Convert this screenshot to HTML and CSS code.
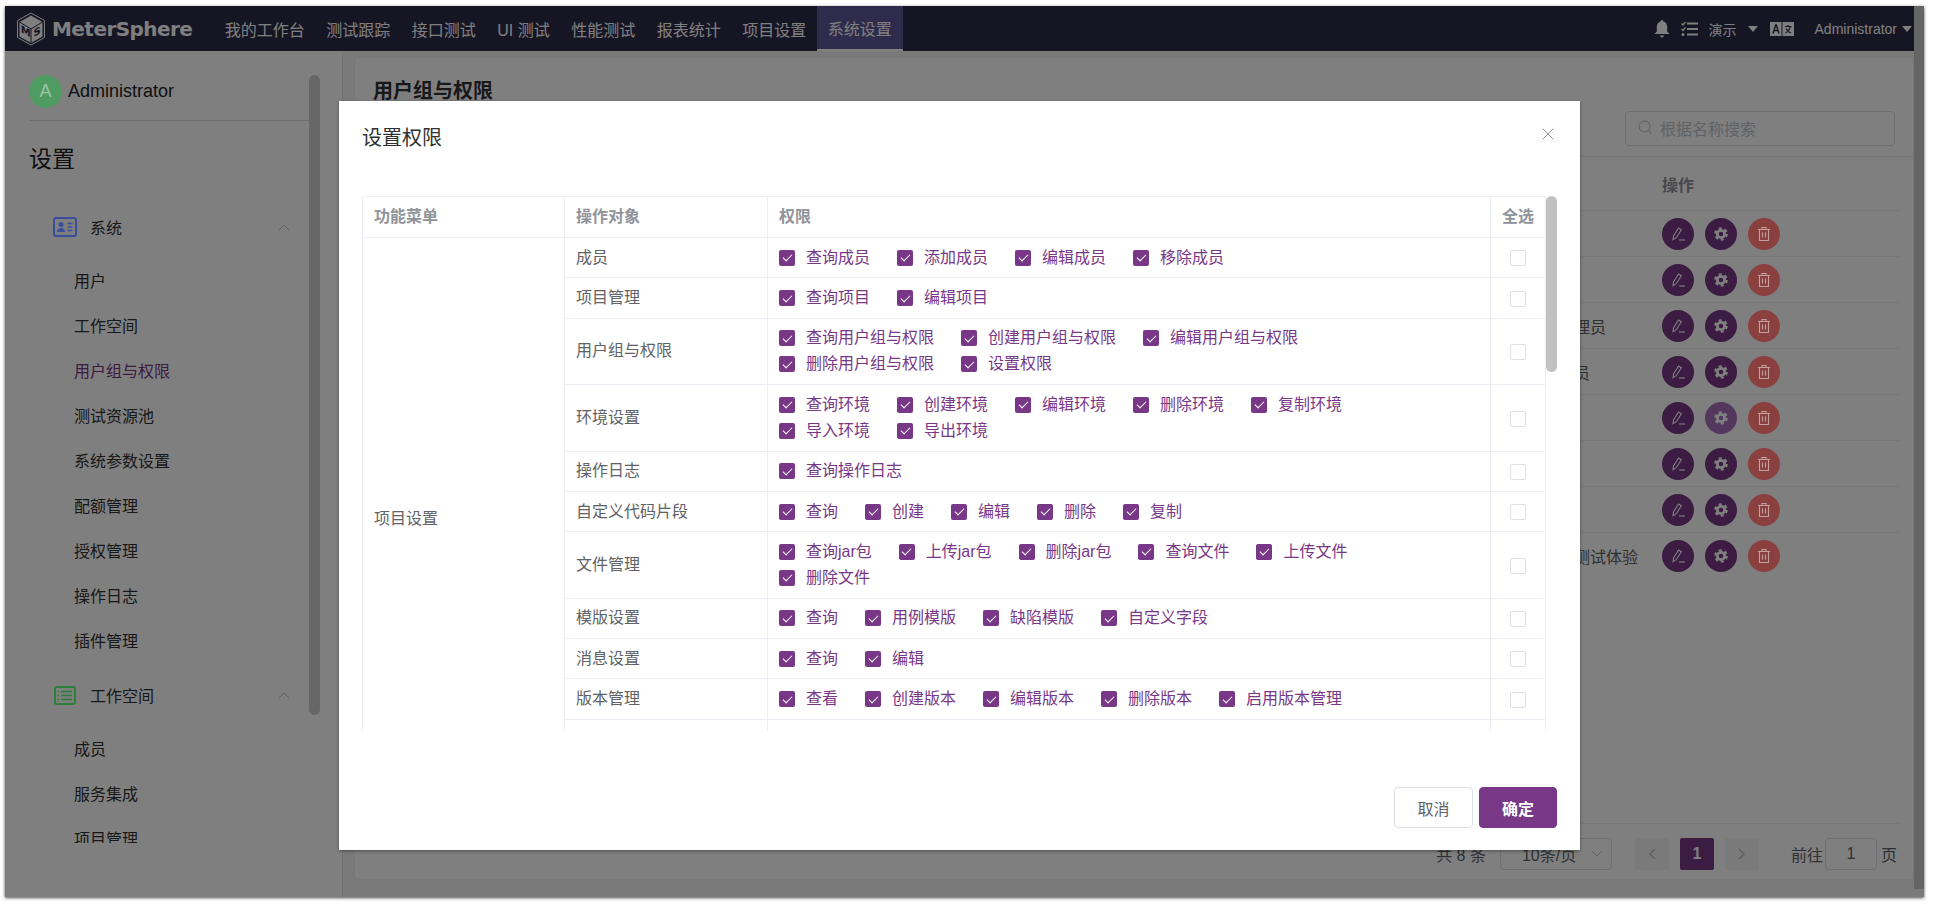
FILE: index.html
```html
<!DOCTYPE html>
<html lang="zh-CN">
<head>
<meta charset="utf-8">
<title>MeterSphere</title>
<link rel="stylesheet" href="styles.css">
</head>
<body>
<svg class="sprite" width="0" height="0">
  <symbol id="i-edit" viewBox="0 0 16 16"><path d="M3.500 10 8.500 2l2.800 1.700-5 8-3.300 2Z" fill="none" stroke="currentColor" stroke-width="1.100"/><path d="M9 14h6" stroke="currentColor" stroke-width="1.100"/></symbol>
  <symbol id="i-gear" viewBox="0 0 16 16"><circle cx="8" cy="8" r="3.700" fill="none" stroke="currentColor" stroke-width="2.800"/><circle cx="8" cy="8" r="5.700" fill="none" stroke="currentColor" stroke-width="2.200" stroke-dasharray="3 2.970"/></symbol>
  <symbol id="i-trash" viewBox="0 0 16 16"><path d="M2 3.500h12M6 3.500V1.500h4v2M3.500 3.500v11h9v-11M6.500 6.500v5M9.500 6.500v5" fill="none" stroke="currentColor" stroke-width="1.100"/></symbol>
</svg>
<div class="window">
  <header class="topbar">
    <div class="logo">
      <svg class="logo-mark" viewBox="0 0 30 34" width="30" height="34"><path d="M15 1 28.500 8.500V25.500L15 33 1.500 25.500V8.500Z" fill="none" stroke="#fff" stroke-width="1"/><path d="M15 3.500 26.500 10V24.500L15 31 3.500 24.500V10Z" fill="#fff"/><path d="M15 17V31M3.500 10 15 17 26.500 10" fill="none" stroke="#2c2a48" stroke-width="1"/><text class="logo-m" transform="matrix(1 .55 0 1 4.800 20)">M</text><text class="logo-m" transform="matrix(1 -.55 0 1 17.500 25)">S</text></svg>
      <span class="logo-text">MeterSphere</span>
    </div>
    <nav class="nav">
      <a class="nav-item">我的工作台</a>
      <a class="nav-item">测试跟踪</a>
      <a class="nav-item">接口测试</a>
      <a class="nav-item">UI 测试</a>
      <a class="nav-item">性能测试</a>
      <a class="nav-item">报表统计</a>
      <a class="nav-item">项目设置</a>
      <a class="nav-item nav-active">系统设置</a>
    </nav>
    <div class="top-right">
      <svg class="bell" viewBox="0 0 16 20" width="16" height="20"><path d="M8 1a1.400 1.400 0 0 1 1.400 1.500C12 3.300 13.200 5.500 13.200 8v4.500L15.500 15H.5l2.300-2.500V8c0-2.500 1.200-4.700 3.800-5.500A1.400 1.400 0 0 1 8 1ZM6 16.500h4a2 2 0 0 1-4 0Z" fill="#fff"/></svg>
      <svg class="tasks" viewBox="0 0 17 16" width="17" height="16"><path d="M6 2.500h11M6 8h11M6 13.500h11" stroke="#fff" stroke-width="2"/><path d="M.5 2.500 2 4 4.500 1M.5 8 2 9.500 4.500 6.500" stroke="#fff" stroke-width="1.300" fill="none"/><circle cx="2" cy="13.500" r="1.500" fill="#fff"/></svg>
      <span class="top-label">演示</span>
      <i class="caret caret-project"></i>
      <svg class="lang" viewBox="0 0 24 14" width="24" height="14"><rect width="11.500" height="14" fill="#fff"/><rect x="12.500" width="11.500" height="14" fill="#fff"/><path d="M3 11.500 5.700 3h.6l2.700 8.500M4 8.500h4" stroke="#2c2a48" stroke-width="1.400" fill="none"/><path d="M15 4.500h6.500M18 3v1.500M20.300 4.500c-.6 3-2.300 5-4.800 6.500M16 6.500c.8 2 2.500 3.500 5 4.500" stroke="#2c2a48" stroke-width="1.200" fill="none"/></svg>
      <span class="top-label top-user">Administrator</span>
      <i class="caret"></i>
    </div>
  </header>
  <div class="body">
    <aside class="sidebar">
      <div class="side-scroll">
        <div class="user-row"><span class="avatar">A</span><span class="user-name">Administrator</span></div>
        <h2 class="side-title">设置</h2>
        <div class="group-head">
          <svg class="group-icon icon-blue" viewBox="0 0 24 20" width="24" height="20"><rect x="1" y="1" width="22" height="18" rx="2" fill="none" stroke="currentColor" stroke-width="2"/><circle cx="8" cy="7.500" r="2.500" fill="currentColor"/><path d="M4 15c0-3 2-4 4-4s4 1 4 4Z" fill="currentColor"/><path d="M14.500 6.500h5M14.500 10h5M14.500 13.500h5" stroke="currentColor" stroke-width="1.300"/></svg>
          <span class="group-label">系统</span>
          <svg class="chevron" viewBox="0 0 12 7" width="12" height="7"><path d="M1 6 6 1l5 5" fill="none" stroke="#c0c4cc" stroke-width="1"/></svg>
        </div>
        <a class="side-item">用户</a>
        <a class="side-item">工作空间</a>
        <a class="side-item side-active">用户组与权限</a>
        <a class="side-item">测试资源池</a>
        <a class="side-item">系统参数设置</a>
        <a class="side-item">配额管理</a>
        <a class="side-item">授权管理</a>
        <a class="side-item">操作日志</a>
        <a class="side-item">插件管理</a>
        <div class="group-head">
          <svg class="group-icon icon-green" viewBox="0 0 24 19" width="24" height="19"><rect x="2" y="1" width="20" height="17" rx="2" fill="none" stroke="currentColor" stroke-width="2"/><path d="M8 5.500h11M8 9.500h11M8 13.500h11M4.500 5.500h1.500M4.500 9.500h1.500M4.500 13.500h1.500" stroke="currentColor" stroke-width="1.600"/></svg>
          <span class="group-label">工作空间</span>
          <svg class="chevron" viewBox="0 0 12 7" width="12" height="7"><path d="M1 6 6 1l5 5" fill="none" stroke="#c0c4cc" stroke-width="1"/></svg>
        </div>
        <a class="side-item">成员</a>
        <a class="side-item">服务集成</a>
        <a class="side-item">项目管理</a>
      </div>
      <div class="side-thumb"></div>
    </aside>
    <main class="content">
      <section class="card">
        <h1 class="card-title">用户组与权限</h1>
        <div class="toolbar">
          <div class="search">
            <svg viewBox="0 0 16 16" width="15" height="15"><circle cx="7" cy="7" r="5.800" fill="none" stroke="#c0c4cc" stroke-width="1.100"/><path d="m11.300 11.300 3.200 3.200" stroke="#c0c4cc" stroke-width="1.100"/></svg>
            <span class="search-ph">根据名称搜索</span>
          </div>
        </div>
        <div class="grid-head"><span class="desc-col"></span><span class="ops-col">操作</span></div>
        <div class="grid-row"><span class="desc-col"></span><span class="ops-col"><button class="op op-p"><svg width="16" height="16"><use href="#i-edit"/></svg></button><button class="op op-p"><svg width="16" height="16"><use href="#i-gear"/></svg></button><button class="op op-r"><svg width="16" height="16"><use href="#i-trash"/></svg></button></span></div>
        <div class="grid-row"><span class="desc-col"></span><span class="ops-col"><button class="op op-p"><svg width="16" height="16"><use href="#i-edit"/></svg></button><button class="op op-p"><svg width="16" height="16"><use href="#i-gear"/></svg></button><button class="op op-r"><svg width="16" height="16"><use href="#i-trash"/></svg></button></span></div>
        <div class="grid-row"><span class="desc-col">工作空间管理员</span><span class="ops-col"><button class="op op-p"><svg width="16" height="16"><use href="#i-edit"/></svg></button><button class="op op-p"><svg width="16" height="16"><use href="#i-gear"/></svg></button><button class="op op-r"><svg width="16" height="16"><use href="#i-trash"/></svg></button></span></div>
        <div class="grid-row"><span class="desc-col">工作空间成员</span><span class="ops-col"><button class="op op-p"><svg width="16" height="16"><use href="#i-edit"/></svg></button><button class="op op-p"><svg width="16" height="16"><use href="#i-gear"/></svg></button><button class="op op-r"><svg width="16" height="16"><use href="#i-trash"/></svg></button></span></div>
        <div class="grid-row"><span class="desc-col"></span><span class="ops-col"><button class="op op-p"><svg width="16" height="16"><use href="#i-edit"/></svg></button><button class="op op-hover"><svg width="16" height="16"><use href="#i-gear"/></svg></button><button class="op op-r"><svg width="16" height="16"><use href="#i-trash"/></svg></button></span></div>
        <div class="grid-row"><span class="desc-col"></span><span class="ops-col"><button class="op op-p"><svg width="16" height="16"><use href="#i-edit"/></svg></button><button class="op op-p"><svg width="16" height="16"><use href="#i-gear"/></svg></button><button class="op op-r"><svg width="16" height="16"><use href="#i-trash"/></svg></button></span></div>
        <div class="grid-row"><span class="desc-col"></span><span class="ops-col"><button class="op op-p"><svg width="16" height="16"><use href="#i-edit"/></svg></button><button class="op op-p"><svg width="16" height="16"><use href="#i-gear"/></svg></button><button class="op op-r"><svg width="16" height="16"><use href="#i-trash"/></svg></button></span></div>
        <div class="grid-row no-line"><span class="desc-col">用户组用于测试体验</span><span class="ops-col"><button class="op op-p"><svg width="16" height="16"><use href="#i-edit"/></svg></button><button class="op op-p"><svg width="16" height="16"><use href="#i-gear"/></svg></button><button class="op op-r"><svg width="16" height="16"><use href="#i-trash"/></svg></button></span></div>
        <div class="pager">
          <span class="pg-total">共 8 条</span>
          <span class="pg-select">10条/页<svg viewBox="0 0 12 7" width="12" height="7"><path d="m1 1 5 5 5-5" fill="none" stroke="#c0c4cc"/></svg></span>
          <span class="pg-btn"><svg viewBox="0 0 8 12" width="8" height="12"><path d="M7 1 2 6l5 5" fill="none" stroke="#c0c4cc" stroke-width="1.600"/></svg></span>
          <span class="pg-btn pg-cur">1</span>
          <span class="pg-btn"><svg viewBox="0 0 8 12" width="8" height="12"><path d="m1 1 5 5-5 5" fill="none" stroke="#c0c4cc" stroke-width="1.600"/></svg></span>
          <span class="pg-goto">前往</span>
          <span class="pg-input">1</span>
          <span class="pg-unit">页</span>
        </div>
      </section>
    </main>
    <div class="page-scroll"></div>
  </div>
  <div class="mask"></div>
  <div class="dialog">
    <div class="dialog-head">
      <span class="dialog-title">设置权限</span>
      <svg class="dialog-close" viewBox="0 0 12 12" width="12" height="12"><path d="m.5.500 11 11M11.500.500l-11 11" stroke="#909399" stroke-width="1"/></svg>
    </div>
    <div class="perm-wrap">
      <table class="perm">
        <colgroup><col class="c1"><col class="c2"><col class="c3"><col class="c4"></colgroup>
        <thead><tr><th>功能菜单</th><th>操作对象</th><th>权限</th><th class="all">全选</th></tr></thead>
        <tbody>
          <tr><td rowspan="12">项目设置</td><td>成员</td><td><div class="opts"><label class="chk">查询成员</label><label class="chk">添加成员</label><label class="chk">编辑成员</label><label class="chk">移除成员</label></div></td><td class="all"><i class="box"></i></td></tr>
          <tr><td>项目管理</td><td><div class="opts"><label class="chk">查询项目</label><label class="chk">编辑项目</label></div></td><td class="all"><i class="box"></i></td></tr>
          <tr><td>用户组与权限</td><td><div class="opts"><label class="chk">查询用户组与权限</label><label class="chk">创建用户组与权限</label><label class="chk">编辑用户组与权限</label><label class="chk">删除用户组与权限</label><label class="chk">设置权限</label></div></td><td class="all"><i class="box"></i></td></tr>
          <tr><td>环境设置</td><td><div class="opts"><label class="chk">查询环境</label><label class="chk">创建环境</label><label class="chk">编辑环境</label><label class="chk">删除环境</label><label class="chk">复制环境</label><label class="chk">导入环境</label><label class="chk">导出环境</label></div></td><td class="all"><i class="box"></i></td></tr>
          <tr><td>操作日志</td><td><div class="opts"><label class="chk">查询操作日志</label></div></td><td class="all"><i class="box"></i></td></tr>
          <tr><td>自定义代码片段</td><td><div class="opts"><label class="chk">查询</label><label class="chk">创建</label><label class="chk">编辑</label><label class="chk">删除</label><label class="chk">复制</label></div></td><td class="all"><i class="box"></i></td></tr>
          <tr><td>文件管理</td><td><div class="opts"><label class="chk">查询jar包</label><label class="chk">上传jar包</label><label class="chk">删除jar包</label><label class="chk">查询文件</label><label class="chk">上传文件</label><label class="chk">删除文件</label></div></td><td class="all"><i class="box"></i></td></tr>
          <tr><td>模版设置</td><td><div class="opts"><label class="chk">查询</label><label class="chk">用例模版</label><label class="chk">缺陷模版</label><label class="chk">自定义字段</label></div></td><td class="all"><i class="box"></i></td></tr>
          <tr><td>消息设置</td><td><div class="opts"><label class="chk">查询</label><label class="chk">编辑</label></div></td><td class="all"><i class="box"></i></td></tr>
          <tr><td>版本管理</td><td><div class="opts"><label class="chk">查看</label><label class="chk">创建版本</label><label class="chk">编辑版本</label><label class="chk">删除版本</label><label class="chk">启用版本管理</label></div></td><td class="all"><i class="box"></i></td></tr>
          <tr class="blank-row"><td></td><td></td><td></td></tr>
          <tr class="blank-row"><td></td><td></td><td></td></tr>
        </tbody>
      </table>
      <div class="perm-thumb"></div>
    </div>
    <div class="dialog-foot">
      <button class="btn">取消</button>
      <button class="btn btn-primary">确定</button>
    </div>
  </div>
</div>
</body>
</html>
```

FILE: styles.css
```css
* { box-sizing: border-box; }
html, body { margin: 0; height: 100%; background: #fff; overflow: hidden; }
body {
  padding: 6px 9px 9px 5px;
  font-family: "Liberation Sans", "Noto Sans CJK SC", sans-serif;
  font-size: 16px;
  color: #606266;
}
.sprite { position: absolute; }
.window {
  position: relative;
  width: 1919px;
  height: 891px;
  display: flex;
  flex-direction: column;
  background: #fff;
  box-shadow: 0 1px 3px rgba(0, 0, 0, .7);
  overflow: hidden;
}

/* top bar */
.topbar {
  height: 45px;
  flex: none;
  display: flex;
  align-items: center;
  background: #2c2a48;
  color: #fff;
}
.logo { width: 209px; padding-left: 11px; display: flex; align-items: center; gap: 6px; }
.logo-m { font: bold 10px "DejaVu Sans", sans-serif; fill: #2c2a48; }
.logo-text { font: bold 20px "DejaVu Sans", sans-serif; letter-spacing: -.55px; white-space: nowrap; color: #fff; }
.nav { display: flex; height: 100%; }
.nav-item { height: 100%; padding: 0 10.750px; display: flex; align-items: center; font-size: 16px; white-space: nowrap; color: #fff; }
.nav-active { background: #5e5799; border-bottom: 2px solid #fff; }
.top-right { margin-left: auto; display: flex; align-items: center; padding-right: 12px; color: #fff; }
.bell { margin-right: 11px; }
.tasks { margin-right: 11px; }
.top-label { font-size: 14px; }
.caret { width: 0; height: 0; border: 5px solid transparent; border-top: 6px solid #fff; border-bottom: 0; margin-left: 5px; }
.caret-project { margin-left: 11px; }
.lang { margin-left: 12px; margin-right: 21px; }

/* layout */
.body { flex: 1; display: flex; min-height: 0; background: #f5f5f5; position: relative; }
.sidebar {
  width: 338px;
  flex: none;
  position: relative;
  background: #fff;
  border-right: 1px solid #e6e6e6;
}
.side-scroll { padding: 24px 0 0 24px; width: 304px; height: 792px; overflow: hidden; }
.user-row { display: flex; align-items: center; gap: 6px; padding-bottom: 12px; border-bottom: 1px solid #d8d8d8; }
.avatar { position: relative; z-index: 1; width: 33px; height: 33px; border-radius: 50%; background: #4f9b62; color: #9cc4a6; text-align: center; line-height: 33px; font-size: 18px; }
.user-name { font-size: 18px; color: #222; }
.side-title { margin: 24px 0 0; font-size: 23px; line-height: 28px; font-weight: 400; color: #222; }
.group-head { display: flex; align-items: center; height: 46px; padding-left: 24px; margin: 8.500px 0 8.500px; }
.side-title + .group-head { margin-top: 31px; }
.group-icon { flex: none; margin-right: 13px; position: relative; z-index: 1; }
.icon-blue { color: #3a4f9c; }
.icon-green { color: #2b8039; }
.group-label { flex: 1; color: #303133; }
.chevron { margin-right: 19px; }
.side-item { display: block; height: 45px; line-height: 45px; padding-left: 45px; color: #303133; }
.side-active { color: #783887; }
.side-thumb { position: absolute; left: 304px; top: 24px; width: 11px; height: 640px; border-radius: 6px; background: #cfcfcf; }

/* main */
.content { flex: 1; min-width: 0; padding: 7px 11px 18px 12px; }
.card { height: 821px; background: #fff; border-radius: 4px; display: flex; flex-direction: column; box-shadow: 0 0 4px rgba(0, 0, 0, .05); padding: 0 13px 0 18px; }
.card-title { margin: 0; padding-top: 20px; height: 54px; font-size: 20px; line-height: 26px; font-weight: 700; color: #303133; }
.toolbar { display: flex; justify-content: flex-end; height: 45px; margin: 0 -13px 0 0; padding-right: 18px; border-bottom: 1px solid #e6e6e6; }
.search { width: 270px; height: 35px; display: flex; align-items: center; gap: 7px; padding: 0 0 2px 12px; margin-top: -1px; border: 1px solid #dcdfe6; border-radius: 4px; background: #fff; font-size: 16px; color: #c0c4cc; }
.grid-head, .grid-row { display: flex; align-items: center; border-bottom: 1px solid #ebeef5; flex: none; }
.grid-head { height: 54px; font-weight: 700; color: #909399; }
.grid-row { height: 46px; }
.no-line { border-bottom: 0; }
.desc-col { width: 1289px; flex: none; padding-left: 1121px; white-space: nowrap; }
.ops-col { display: flex; gap: 11px; }
.op { width: 32px; height: 32px; padding: 0; border: 0; border-radius: 50%; display: flex; align-items: center; justify-content: center; color: #fff; }
.op-p { background: #783887; }
.op-r { position: relative; z-index: 1; background: #8a403e; }
.op-r svg { opacity: .5; }
.op-hover { background: #a86fbb; }
.pager { margin: auto 0 9px 0; padding-top: 13px; border-top: 1px solid #ebeef5; display: flex; align-items: center; justify-content: flex-end; height: 47px; }
.pg-total { font-size: 16px; margin-right: 14px; }
.pg-select { width: 112px; height: 32px; border: 1px solid #dcdfe6; border-radius: 4px; display: flex; align-items: center; justify-content: space-between; padding: 0 8px 0 21px; margin-right: 23px; }
.pg-btn { width: 34px; height: 32px; background: #f4f4f5; border-radius: 2px; margin-right: 11px; display: flex; align-items: center; justify-content: center; color: #606266; font-weight: 700; }
.pg-cur { background: #783887; color: #fff; }
.pg-goto { margin-left: 21px; margin-right: 2px; }
.pg-input { width: 52px; height: 32px; border: 1px solid #dcdfe6; border-radius: 4px; text-align: center; line-height: 30px; margin-right: 4px; }
.pg-unit { margin-right: 3px; }
.page-scroll { position: absolute; right: 0; top: -45px; bottom: 8px; width: 10px; background: #cbcbcb; }

/* overlay */
.mask { position: absolute; inset: 0; background: rgba(0, 0, 0, .5); }
.dialog {
  position: absolute;
  z-index: 2;
  left: 334px;
  top: 95px;
  width: 1241px;
  height: 749px;
  background: #fff;
  box-shadow: 0 1px 3px rgba(0, 0, 0, .4);
  padding: 0 23px;
  display: flex;
  flex-direction: column;
}
.dialog-head { height: 95px; flex: none; display: flex; justify-content: space-between; padding-top: 23px; }
.dialog-title { font-size: 20px; line-height: 28px; color: #303133; }
.dialog-close { margin: 4px 3px 0 0; }
.perm-wrap { position: relative; height: 535px; overflow: hidden; flex: none; }
.perm { width: 1183px; table-layout: fixed; border-collapse: collapse; border: 1px solid #ebeef5; font-size: 16px; }
.c1 { width: 202px; } .c2 { width: 203px; } .c3 { width: 723px; } .c4 { width: 55px; }
.perm th, .perm td { border: 1px solid #ebeef5; padding: 6.700px 11px; line-height: 26px; text-align: left; }
.perm th { font-weight: 700; color: #909399; padding-top: 7px; padding-bottom: 7px; }
.perm td { color: #606266; }
.perm .all { text-align: center; padding-left: 0; padding-right: 0; }
.blank-row td { height: 40.400px; }
.opts { display: flex; flex-wrap: wrap; }
.chk { position: relative; padding-left: 27px; margin-right: 27px; height: 26px; color: #783887; white-space: nowrap; }
.chk::before { content: ""; position: absolute; left: 0; top: 5px; width: 16px; height: 16px; border-radius: 2px; background: #783887; }
.chk::after { content: ""; position: absolute; left: 5.500px; top: 7.500px; width: 4px; height: 8px; border: solid #fff; border-width: 0 1px 1px 0; transform: rotate(45deg); }
.box { display: inline-block; width: 16px; height: 16px; border: 1px solid #dcdfe6; border-radius: 2px; vertical-align: middle; }
.perm-thumb { position: absolute; right: 0; top: 0; width: 11px; height: 176px; border-radius: 6px; background: #c1c1c1; }
.dialog-foot { flex: none; display: flex; justify-content: flex-end; gap: 6px; padding-top: 56px; }
.btn { width: 79px; height: 41px; border: 1px solid #dcdfe6; border-radius: 4px; background: #fff; font: 16px "Liberation Sans", "Noto Sans CJK SC", sans-serif; color: #606266; }
.btn-primary { width: 78px; background: #783887; border-color: #783887; color: #fff; font-weight: 700; }
```
